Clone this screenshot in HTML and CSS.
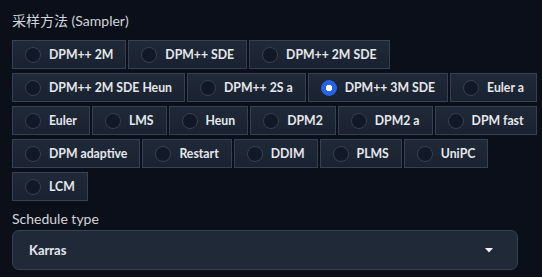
FILE: index.html
```html
<!DOCTYPE html>
<html lang="en">
<head>
  <meta charset="UTF-8">
  <title>Sampler</title>
  <link rel="stylesheet" href="styles.css">
</head>
<body>

<div class="block">
  <span class="label">采样方法 (Sampler)</span>
  <div class="radios">
    <label class="radio"><span class="dot"></span>DPM++ 2M</label>
    <label class="radio"><span class="dot"></span>DPM++ SDE</label>
    <label class="radio"><span class="dot"></span>DPM++ 2M SDE</label>
    <label class="radio"><span class="dot"></span>DPM++ 2M SDE Heun</label>
    <label class="radio"><span class="dot"></span>DPM++ 2S a</label>
    <label class="radio selected"><span class="dot"></span>DPM++ 3M SDE</label>
    <label class="radio"><span class="dot"></span>Euler a</label>
    <label class="radio"><span class="dot"></span>Euler</label>
    <label class="radio"><span class="dot"></span>LMS</label>
    <label class="radio"><span class="dot"></span>Heun</label>
    <label class="radio"><span class="dot"></span>DPM2</label>
    <label class="radio"><span class="dot"></span>DPM2 a</label>
    <label class="radio"><span class="dot"></span>DPM fast</label>
    <label class="radio"><span class="dot"></span>DPM adaptive</label>
    <label class="radio"><span class="dot"></span>Restart</label>
    <label class="radio"><span class="dot"></span>DDIM</label>
    <label class="radio"><span class="dot"></span>PLMS</label>
    <label class="radio"><span class="dot"></span>UniPC</label>
    <label class="radio"><span class="dot"></span>LCM</label>
  </div>
</div>

<div class="block">
  <span class="label label-tight">Schedule type</span>
  <div class="dropdown">
    <span>Karras</span>
    <svg class="arrow" width="8" height="5" viewBox="0 0 8 5"><path d="M0 0 L8 0 L4 4.5 Z" fill="#f3f4f6"/></svg>
  </div>
</div>

</body>
</html>
```

FILE: styles.css
```css
body {
  margin: 0;
  padding: 12px 5px 0 12px;
  background: #0b0f19;
  font-family: 'Lato', 'Noto Sans CJK SC', sans-serif;
  color: #e5e7eb;
}

.block {
  margin-bottom: 9px;
}

.label {
  display: block;
  font-size: 14px;
  color: #d1d5db;
  line-height: 18px;
  margin-bottom: 10px;
}

.label-tight {
  margin-bottom: 2px;
}

.radios {
  display: flex;
  flex-wrap: wrap;
  column-gap: 2px;
  row-gap: 4px;
}

.radio {
  display: flex;
  align-items: center;
  gap: 8px;
  height: 27px;
  padding: 0 12px;
  background: linear-gradient(#1f2937, #1a2231);
  border: 1px solid #374151;
  font-size: 12.25px;
  font-weight: 700;
  color: #e5e7eb;
}

.dot {
  width: 14px;
  height: 14px;
  border-radius: 50%;
  border: 1px solid #374151;
  background: #111827;
  box-sizing: content-box;
}

.selected .dot {
  border-color: #2563eb;
  background: radial-gradient(circle, #fff 0 3px, #2563eb 3.5px);
}

.dropdown {
  display: flex;
  align-items: center;
  justify-content: space-between;
  height: 38px;
  margin-right: 19px;
  padding: 0 24px 0 16px;
  background: #1f2937;
  border: 1px solid #374151;
  border-radius: 7px;
  font-size: 13px;
  font-weight: 700;
  color: #e5e7eb;
}
```
